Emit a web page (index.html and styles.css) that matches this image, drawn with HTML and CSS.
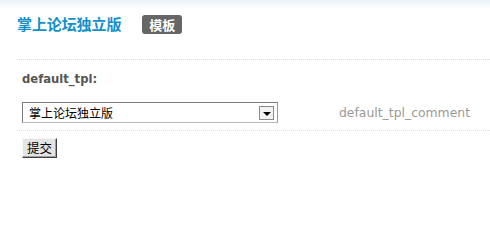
FILE: index.html
```html
<!DOCTYPE html>
<html lang="zh-CN">
<head>
<meta charset="utf-8">
<title>掌上论坛独立版</title>
<link rel="stylesheet" href="styles.css">
</head>
<body>
<div class="page">
  <div class="header">
    <h1 class="title">掌上论坛独立版</h1>
    <span class="badge">模板</span>
  </div>
  <form class="form">
    <div class="row-label">
      <label class="label" for="tpl">default_tpl:</label>
    </div>
    <div class="row-field">
      <div class="select-wrap">
        <select id="tpl" class="select">
          <option>掌上论坛独立版</option>
        </select>
        <span class="select-arrow"><span class="tri"></span></span>
      </div>
      <span class="comment">default_tpl_comment</span>
    </div>
    <div class="row-submit">
      <button type="button" class="btn">提交</button>
    </div>
  </form>
</div>
</body>
</html>
```

FILE: styles.css
```css
html, body {
  margin: 0;
  padding: 0;
  background: #fff;
}
body {
  font-family: "DejaVu Sans", "Noto Sans CJK SC", sans-serif;
  font-size: 12px;
  color: #333;
}
.page {
  background: linear-gradient(to bottom, #eaf2fa 0px, #ffffff 9px);
  background-repeat: no-repeat;
  min-height: 204px;
}
.header {
  display: flex;
  align-items: center;
  padding: 14px 17px 0 17px;
  height: 20px;
}
.title {
  margin: 0;
  font-family: "Noto Sans CJK SC", sans-serif;
  font-size: 15px;
  font-weight: bold;
  line-height: 20px;
  color: #1190cc;
  letter-spacing: -0.1px;
}
.badge {
  margin-left: 21px;
  display: inline-flex;
  align-items: center;
  justify-content: center;
  height: 19px;
  width: 40px;
  background: #666;
  color: #fff;
  font-family: "Noto Sans CJK SC", sans-serif;
  font-size: 13px;
  font-weight: bold;
  border-radius: 3px;
}
.form {
  margin: 25px 0 0 17px;
  border-top: 1px dotted #dcdcdc;
}
.row-label {
  padding: 9px 0 0 5px;
  height: 27px;
}
.label {
  font-family: "DejaVu Sans", sans-serif;
  font-size: 11.6px;
  font-weight: bold;
  color: #555;
  line-height: 20px;
}
.row-field {
  display: flex;
  align-items: center;
  padding: 6px 0 7px 5px;
  border-bottom: 1px dotted #dcdcdc;
}
.select-wrap {
  position: relative;
  width: 256px;
  height: 21px;
}
.select {
  -webkit-appearance: none;
  appearance: none;
  box-sizing: border-box;
  width: 256px;
  height: 21px;
  margin: 0;
  padding: 0 0 0 6px;
  border: 1px solid #7a7a7a;
  border-right-color: #9a9a9a;
  border-bottom-color: #b5b5b5;
  border-radius: 0;
  background: #fff;
  font-family: "Noto Sans CJK SC", sans-serif;
  font-size: 12px;
  color: #000;
  line-height: 19px;
}
.select-arrow {
  position: absolute;
  right: 4px;
  top: 4px;
  box-sizing: border-box;
  width: 15px;
  height: 14px;
  border: 1px solid #8a8a8a;
  background: #f2f2f2;
  display: flex;
  align-items: center;
  justify-content: center;
  pointer-events: none;
}
.tri {
  width: 0;
  height: 0;
  border-left: 4px solid transparent;
  border-right: 4px solid transparent;
  border-top: 4px solid #000;
  margin-top: 1px;
}
.comment {
  margin-left: 61px;
  font-family: "DejaVu Sans", sans-serif;
  font-size: 12.4px;
  color: #999;
  line-height: 20px;
}
.row-submit {
  padding: 7px 0 0 5px;
}
.btn {
  box-sizing: border-box;
  width: 35px;
  height: 20px;
  margin: 0;
  padding: 0;
  background: #e4e4e4;
  border: 1px solid;
  border-color: #f8f8f8 #404040 #404040 #f8f8f8;
  box-shadow: inset -1px -1px 0 #a0a0a0;
  font-family: "Noto Sans CJK SC", sans-serif;
  font-size: 12.5px;
  color: #000;
  line-height: 18px;
  border-radius: 0;
}
```
